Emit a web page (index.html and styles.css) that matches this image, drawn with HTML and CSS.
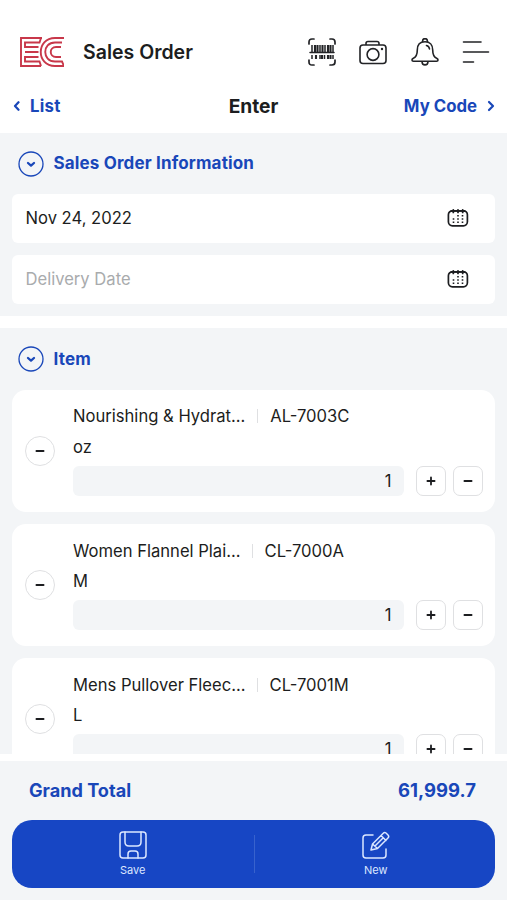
FILE: index.html
```html
<!DOCTYPE html>
<html lang="en">
<head>
<meta charset="utf-8">
<meta name="viewport" content="width=device-width, initial-scale=1">
<title>Sales Order</title>
<link rel="stylesheet" href="styles.css">
</head>
<body>
<svg class="defs" width="0" height="0" aria-hidden="true">
  <symbol id="chevron" viewBox="0 0 26 26"><circle cx="13" cy="13" r="12" stroke-width="1.3"/><path d="M10 12l3 2.6 3-2.6" stroke-width="2.3"/></symbol>
  <symbol id="calendar" viewBox="0 0 22 20"><rect x="1.4" y="2.8" width="19" height="15" rx="4" stroke-width="1.7"/><path d="M6.3 1.8v2.6M11 1.8v2.6M15.7 1.8v2.6M4.5 2.8h13" stroke-width="1.8"/><path d="M10.2 7.8h1.6M14.7 7.8h1.6M5.7 11h1.6M10.2 11h1.6M14.7 11h1.6M5.7 14.2h1.6M10.2 14.2h1.6M14.7 14.2h1.6" stroke-width="1.6" stroke-linecap="butt"/></symbol>
  <symbol id="minus" viewBox="0 0 10 10"><path d="M1.4 5h7.2" stroke-width="1.8"/></symbol>
  <symbol id="plus" viewBox="0 0 10 10"><path d="M1.4 5h7.2M5 1.4v7.2" stroke-width="1.8"/></symbol>
</svg>
<div class="app">
  <header class="header">
    <svg class="logo" viewBox="0 0 44 30"><path d="M22 1H1v28h20M21 1l-1.5 4.5H5V10h13.5M18.5 15H5M18.5 20H5v4.5h14.5L21 29M44 1H35C16 1 16 29 35 29h9M42 5.5h-7c-13 0-13 19 0 19h7L44 29M41 10h-5c-7 0-7 10 0 10h5"/></svg>
    <h1 class="title">Sales Order</h1>
    <div class="tools">
      <svg class="icon" width="28" height="28" viewBox="0 0 28 28"><path d="M1 6V4q0-3 3-3h2M22 1h2q3 0 3 3v2M27 22v2q0 3-3 3h-2M6 27H4q-3 0-3-3v-2" stroke-width="1.7"/><path d="M2 14.5h24" stroke-width="1.5"/><path d="M4 7v7M12 7v7M17 7v7M25 7v7M4 17v4M12 17v4M16.5 17v4M25 17v4" stroke-width="1.5" stroke-linecap="butt"/><path d="M7 7v7M9.5 7v7M14.5 7v7M20 7v7M22.5 7v7M8 17v4M14 17v4M20 17v4M22.5 17v4" stroke-width="2.1" stroke-linecap="butt"/></svg>
      <svg class="icon camera" width="28" height="26" viewBox="0 0 28 26"><path d="M7 5V3.5q0-2 2-2h9q2 0 2 2V5M4 5h20q3 0 3 3v12.5q0 3-3 3H4q-3 0-3-3V8q0-3 3-3Z" stroke-width="1.6"/><circle cx="14" cy="14.5" r="5.9" stroke-width="1.6"/><circle class="dot" cx="23" cy="9" r="1.2"/></svg>
      <svg class="icon" width="28" height="28" viewBox="0 0 28 28"><path d="M11.6 4.2V3a2.4 2.4 0 0 1 4.8 0v1.2M14 3.8c-5 0-7.7 3.2-7.7 8.2 0 5-1.2 7-3.9 8.2-2 1-1.8 3 0 3h23.2c1.8 0 2-2 0-3-2.7-1.2-3.9-3.2-3.9-8.2 0-5-2.7-8.2-7.7-8.2ZM11 23.5c0 4.5 6 4.5 6 0M15.5 7.5c1.8.5 2.8 1.8 3 3.5" stroke-width="1.6"/></svg>
      <svg class="icon" width="28" height="24" viewBox="0 0 28 24"><path d="M1.5 2H19M1.5 12h25M1.5 22h10" stroke-width="1.6"/></svg>
    </div>
  </header>
  <nav class="nav">
    <a class="nav-link"><svg class="arrow" viewBox="0 0 8 12"><path d="M6.5 2.2L3 6l3.5 3.8"/></svg><span class="list-label">List</span></a>
    <strong class="nav-title">Enter</strong>
    <a class="nav-link nav-right"><span>My Code</span><svg class="arrow" viewBox="0 0 8 12"><path d="M2 2l4 4-4 4"/></svg></a>
  </nav>
  <main class="content">
    <section class="section info">
      <h2 class="section-title"><svg><use href="#chevron"/></svg><span>Sales Order Information</span></h2>
      <div class="field"><span class="date">Nov 24, 2022</span><svg class="calendar"><use href="#calendar"/></svg></div>
      <div class="field placeholder"><span class="delivery">Delivery Date</span><svg class="calendar"><use href="#calendar"/></svg></div>
    </section>
    <section class="section items">
      <h2 class="section-title"><svg><use href="#chevron"/></svg><span>Item</span></h2>
      <article class="card">
        <button class="remove" aria-label="Remove"><svg><use href="#minus"/></svg></button>
        <div class="details"><div class="product"><span class="name">Nourishing &amp; Hydrat...</span><span class="code">AL-7003C</span></div><div class="size">oz</div>
          <div class="quantity"><output>1</output><button aria-label="Increase"><svg><use href="#plus"/></svg></button><button aria-label="Decrease"><svg><use href="#minus"/></svg></button></div></div>
      </article>
      <article class="card">
        <button class="remove" aria-label="Remove"><svg><use href="#minus"/></svg></button>
        <div class="details"><div class="product"><span class="name">Women Flannel Plai...</span><span class="code">CL-7000A</span></div><div class="size">M</div>
          <div class="quantity"><output>1</output><button aria-label="Increase"><svg><use href="#plus"/></svg></button><button aria-label="Decrease"><svg><use href="#minus"/></svg></button></div></div>
      </article>
      <article class="card">
        <button class="remove" aria-label="Remove"><svg><use href="#minus"/></svg></button>
        <div class="details"><div class="product"><span class="name">Mens Pullover Fleec...</span><span class="code">CL-7001M</span></div><div class="size">L</div>
          <div class="quantity"><output>1</output><button aria-label="Increase"><svg><use href="#plus"/></svg></button><button aria-label="Decrease"><svg><use href="#minus"/></svg></button></div></div>
      </article>
    </section>
  </main>
  <footer class="footer">
    <div class="total"><span>Grand Total</span><span class="amount">61,999.7</span></div>
    <div class="actions">
      <button class="action"><svg viewBox="0 0 28 28"><rect x="1" y="1" width="26" height="26" rx="3"/><path d="M6 1v10q0 4 4 4h8q4 0 4-4V1M9 27v-4q0-3 3-3h4q3 0 3 3v4"/></svg><span>Save</span></button>
      <button class="action"><svg viewBox="0 0 28 28"><path d="M11 4H4Q1 4 1 7v17q0 3 3 3h17q3 0 3-3v-6M9 19l1.5-6L21 2.5Q22.5 1 24 2l2 2q1.5 1.5 0 3L15.5 17.5 9 19ZM10.5 13l5 4.5M19 4.5l5 5M13 15l8-8"/></svg><span>New</span></button>
    </div>
  </footer>
</div>
</body>
</html>
```
FILE: styles.css
```css
* { box-sizing: border-box; }
body { margin: 0; background: #fff; color: #1c1d20; font-family: Inter, "Liberation Sans", sans-serif; font-size: 16.6px; }
h1, h2 { margin: 0; }
svg { display: block; fill: none; stroke: currentColor; stroke-linecap: round; stroke-linejoin: round; flex: none; }
.defs { position: absolute; }
button { padding: 0; border: 0; font: inherit; color: inherit; }
.app { height: 900px; display: flex; flex-direction: column; overflow: hidden; }
.header { height: 84px; padding: 20px 17px 0 20px; display: flex; align-items: center; flex: none; }
.logo { width: 44px; height: 30px; color: #c8384a; stroke-width: 1.9; stroke-linecap: butt; stroke-linejoin: miter; }
.title { margin-left: 19px; font-size: 19.5px; font-weight: 600; line-height: 24px; }
.tools { margin-left: auto; display: flex; align-items: center; gap: 23.5px; }
.icon { color: #222326; }
.camera { margin-top: 2px; }
.dot { fill: currentColor; stroke: none; }
.nav { height: 49px; padding: 0 12px 5px; display: grid; grid-template-columns: 1fr auto 1fr; align-items: center; flex: none; color: #1947b9; }
.nav-link { display: flex; align-items: center; gap: 10px; font-size: 16.8px; font-weight: 650; line-height: 22px; }
.nav-right { justify-content: flex-end; }
.list-label { letter-spacing: .25px; }
.arrow { width: 8px; height: 12px; stroke-width: 2.2; }
.nav-title { color: #1c1d20; font-size: 19.2px; font-weight: 650; line-height: 22px; }
.content { height: 621px; overflow: hidden; flex: none; }
.section { padding: 0 12px; background: #f3f5f7; }
.info { height: 183px; }
.items { margin-top: 12px; height: 450px; }
.section-title { height: 61px; padding-left: 6px; display: flex; align-items: center; gap: 9.5px; color: #1947b9; font-size: 17px; font-weight: 700; letter-spacing: .15px; }
.section-title svg { width: 26px; height: 26px; }
.info .section-title span { padding-bottom: 1px; }
.items .section-title { height: 61.7px; }
.items .section-title span { padding-top: 1px; }
.field { height: 49px; margin: 0 0 12px; padding: 0 26px 1px 13.5px; display: flex; align-items: center; justify-content: space-between; border-radius: 6px; background: #fff; }
.placeholder { color: #a9abad; }
.calendar { width: 22px; height: 20px; color: #1c1d20; }
.card { height: 122px; margin-bottom: 12.4px; padding: 0 12px 0 13px; display: flex; align-items: center; border-radius: 14px; background: #fff; }
.remove { width: 30px; height: 30px; flex: none; display: grid; place-items: center; border: 1px solid #dfe0e2; border-radius: 50%; background: #fff; }
.remove svg, .quantity svg { width: 10px; height: 10px; }
.details { width: 100%; height: 122px; margin-left: 18px; padding-top: 14px; }
.product { display: flex; align-items: center; height: 25px; white-space: nowrap; }
.code { margin-left: 12px; display: flex; align-items: center; }
.code::before { content: ""; width: 1px; height: 14px; margin-right: 12px; background: #dfe0e2; }
.card + .card .code { margin-left: 11px; }
.size { height: 37px; line-height: 36px; }
.quantity { height: 30px; display: flex; }
.quantity output { flex: 1; height: 30px; padding-right: 12.5px; border-radius: 6px; background: #f3f5f7; text-align: right; line-height: 30px; }
.quantity button { width: 30px; height: 30px; margin-left: 7px; display: grid; place-items: center; border: 1px solid #dfe0e2; border-radius: 7px; background: #fff; }
.quantity output + button { margin-left: 12px; }
.footer { height: 139px; margin-top: 7px; padding: 0 12px; background: #f3f5f7; flex: none; }
.total { height: 59px; padding: 0 19px 1px 17px; display: flex; align-items: center; justify-content: space-between; color: #1947b9; font-size: 18.1px; font-weight: 650; }
.amount { font-size: 18.5px; }
.actions { height: 68px; display: grid; grid-template-columns: 1fr 1fr; border-radius: 20px; background: #1746c4; color: #dce7ff; }
.action { display: flex; flex-direction: column; align-items: center; padding-top: 11px; background: transparent; font-size: 11px; line-height: 14px; position: relative; }
.action svg { width: 28px; height: 28px; stroke-width: 1.5; margin-bottom: 4px; }
.action + .action { padding-left: 3px; }
.action + .action::before { content: ""; position: absolute; left: 0; top: 15px; width: 1px; height: 38px; background: #3862cd; }
```
